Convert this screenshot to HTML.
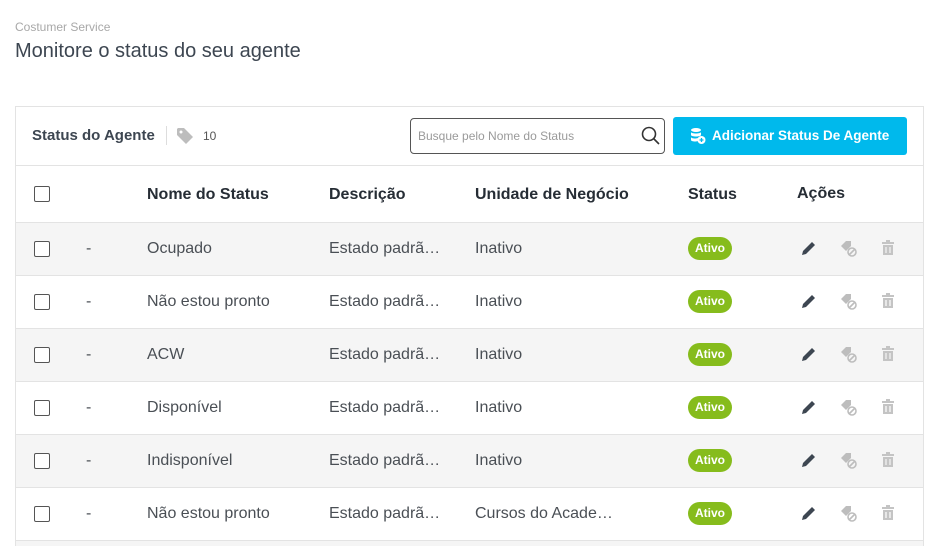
<!DOCTYPE html><html><head><style>
*{box-sizing:border-box;margin:0;padding:0}
html,body{width:931px;height:546px;overflow:hidden}
body{background:#fff;font-family:"Liberation Sans",sans-serif;color:#3d4651;position:relative}
.a{position:absolute}
.card{left:15px;top:106px;width:909px;height:440px;border:1px solid #e3e3e3}
.row{position:absolute;left:16px;width:907px;height:53px;border-top:1px solid #e3e3e3}
.g{background:#f5f5f5}
.cb{position:absolute;left:18px;top:18px;width:16px;height:16px;border:1.5px solid #555;border-radius:2px;background:#fff}
.t{position:absolute;top:17px;font-size:16px;color:#4a4f55;white-space:nowrap}
.badge{position:absolute;left:672px;top:14px;width:44px;height:23px;border-radius:12px;background:#86bc1c;color:#fff;font-size:12px;font-weight:bold;text-align:center;line-height:23px}
.h{position:absolute;top:20px;font-size:16px;font-weight:bold;color:#262d35}
.ic{position:absolute;top:17px}
</style></head><body>
<div class="a" style="left:15px;top:20px;font-size:12px;color:#a8a8a8">Costumer Service</div>
<div class="a" style="left:15px;top:40px;font-size:20px;color:#3d4651">Monitore o status do seu agente</div>
<div class="a card"></div>
<div class="a" style="left:32px;top:127px;font-size:15px;font-weight:bold;color:#3d4651">Status do Agente</div>
<div class="a" style="left:166px;top:126px;width:1px;height:19px;background:#ddd"></div>
<svg class="a" style="left:176px;top:127px" width="18" height="18" viewBox="0 0 18 18"><path d="M1 2v6l9 9 7-7-9-9H2z" fill="#bdbdbd"/><circle cx="5" cy="5" r="1.5" fill="#fff"/></svg>
<div class="a" style="left:203px;top:129px;font-size:12px;color:#555">10</div>
<div class="a" style="left:410px;top:118px;width:255px;height:36px;border:1px solid #555;border-radius:4px"></div>
<div class="a" style="left:418px;top:129px;font-size:12px;color:#9a9a9a">Busque pelo Nome do Status</div>
<svg class="a" style="left:641px;top:126px" width="20" height="20" viewBox="0 0 20 20"><circle cx="8" cy="8" r="6.5" stroke="#333" stroke-width="1.6" fill="none"/><path d="M13 13l5 5" stroke="#333" stroke-width="1.6"/></svg>
<div class="a" style="left:673px;top:117px;width:234px;height:38px;background:#00b9ec;border-radius:3px"></div>
<svg class="a" style="left:690px;top:127px" width="16" height="18" viewBox="0 0 16 18"><ellipse cx="6" cy="3" rx="5" ry="2" fill="#fff"/><path d="M1 5c0 2 10 2 10 0v3c0 2-10 2-10 0zM1 10c0 2 8 2 8 0v3c0 2-8 2-8 0z" fill="#fff"/><circle cx="11.5" cy="13" r="4" fill="#fff"/><path d="M11.5 11v4M9.5 13h4" stroke="#00b9ec" stroke-width="1.3"/></svg>
<div class="a" style="left:712px;top:128px;font-size:13.5px;font-weight:bold;color:#fff">Adicionar Status De Agente</div>
<div class="row" style="top:165px;height:57px">
<div class="cb" style="top:20px"></div>
<div class="h" style="left:131px">Nome do Status</div>
<div class="h" style="left:313px">Descrição</div>
<div class="h" style="left:459px">Unidade de Negócio</div>
<div class="h" style="left:672px">Status</div>
<div class="h" style="left:781px;top:19px">Ações</div>
</div>
<div class="row g" style="top:222px"><div class="cb"></div><div class="t" style="left:70px">-</div><div class="t" style="left:131px">Ocupado</div><div class="t" style="left:313px">Estado padrã…</div><div class="t" style="left:459px">Inativo</div><div class="badge">Ativo</div>
<svg class="ic" style="left:785px" width="16" height="16" viewBox="0 0 16 16"><path d="M1 15l1-4 9-9 3 3-9 9z" fill="#3d4651"/></svg><svg class="ic" style="left:824px" width="18" height="18" viewBox="0 0 18 18"><path d="M1 6l5-5h5v5l-5 5z" fill="#bdbdbd"/><circle cx="12" cy="12" r="4" fill="none" stroke="#bdbdbd" stroke-width="1.6"/><path d="M9.5 14.5l5-5" stroke="#bdbdbd" stroke-width="1.6"/></svg><svg class="ic" style="left:865px" width="14" height="16" viewBox="0 0 14 16"><path d="M1 3h12M5 1h4" stroke="#c4c4c4" stroke-width="2"/><path d="M2 5h10v10H2z" fill="#c4c4c4"/><path d="M5 7v6M9 7v6" stroke="#f5f5f5" stroke-width="1.2"/></svg></div>
<div class="row" style="top:275px"><div class="cb"></div><div class="t" style="left:70px">-</div><div class="t" style="left:131px">Não estou pronto</div><div class="t" style="left:313px">Estado padrã…</div><div class="t" style="left:459px">Inativo</div><div class="badge">Ativo</div>
<svg class="ic" style="left:785px" width="16" height="16" viewBox="0 0 16 16"><path d="M1 15l1-4 9-9 3 3-9 9z" fill="#3d4651"/></svg><svg class="ic" style="left:824px" width="18" height="18" viewBox="0 0 18 18"><path d="M1 6l5-5h5v5l-5 5z" fill="#bdbdbd"/><circle cx="12" cy="12" r="4" fill="none" stroke="#bdbdbd" stroke-width="1.6"/><path d="M9.5 14.5l5-5" stroke="#bdbdbd" stroke-width="1.6"/></svg><svg class="ic" style="left:865px" width="14" height="16" viewBox="0 0 14 16"><path d="M1 3h12M5 1h4" stroke="#c4c4c4" stroke-width="2"/><path d="M2 5h10v10H2z" fill="#c4c4c4"/><path d="M5 7v6M9 7v6" stroke="#fff" stroke-width="1.2"/></svg></div>
<div class="row g" style="top:328px"><div class="cb"></div><div class="t" style="left:70px">-</div><div class="t" style="left:131px">ACW</div><div class="t" style="left:313px">Estado padrã…</div><div class="t" style="left:459px">Inativo</div><div class="badge">Ativo</div>
<svg class="ic" style="left:785px" width="16" height="16" viewBox="0 0 16 16"><path d="M1 15l1-4 9-9 3 3-9 9z" fill="#3d4651"/></svg><svg class="ic" style="left:824px" width="18" height="18" viewBox="0 0 18 18"><path d="M1 6l5-5h5v5l-5 5z" fill="#bdbdbd"/><circle cx="12" cy="12" r="4" fill="none" stroke="#bdbdbd" stroke-width="1.6"/><path d="M9.5 14.5l5-5" stroke="#bdbdbd" stroke-width="1.6"/></svg><svg class="ic" style="left:865px" width="14" height="16" viewBox="0 0 14 16"><path d="M1 3h12M5 1h4" stroke="#c4c4c4" stroke-width="2"/><path d="M2 5h10v10H2z" fill="#c4c4c4"/><path d="M5 7v6M9 7v6" stroke="#f5f5f5" stroke-width="1.2"/></svg></div>
<div class="row" style="top:381px"><div class="cb"></div><div class="t" style="left:70px">-</div><div class="t" style="left:131px">Disponível</div><div class="t" style="left:313px">Estado padrã…</div><div class="t" style="left:459px">Inativo</div><div class="badge">Ativo</div>
<svg class="ic" style="left:785px" width="16" height="16" viewBox="0 0 16 16"><path d="M1 15l1-4 9-9 3 3-9 9z" fill="#3d4651"/></svg><svg class="ic" style="left:824px" width="18" height="18" viewBox="0 0 18 18"><path d="M1 6l5-5h5v5l-5 5z" fill="#bdbdbd"/><circle cx="12" cy="12" r="4" fill="none" stroke="#bdbdbd" stroke-width="1.6"/><path d="M9.5 14.5l5-5" stroke="#bdbdbd" stroke-width="1.6"/></svg><svg class="ic" style="left:865px" width="14" height="16" viewBox="0 0 14 16"><path d="M1 3h12M5 1h4" stroke="#c4c4c4" stroke-width="2"/><path d="M2 5h10v10H2z" fill="#c4c4c4"/><path d="M5 7v6M9 7v6" stroke="#fff" stroke-width="1.2"/></svg></div>
<div class="row g" style="top:434px"><div class="cb"></div><div class="t" style="left:70px">-</div><div class="t" style="left:131px">Indisponível</div><div class="t" style="left:313px">Estado padrã…</div><div class="t" style="left:459px">Inativo</div><div class="badge">Ativo</div>
<svg class="ic" style="left:785px" width="16" height="16" viewBox="0 0 16 16"><path d="M1 15l1-4 9-9 3 3-9 9z" fill="#3d4651"/></svg><svg class="ic" style="left:824px" width="18" height="18" viewBox="0 0 18 18"><path d="M1 6l5-5h5v5l-5 5z" fill="#bdbdbd"/><circle cx="12" cy="12" r="4" fill="none" stroke="#bdbdbd" stroke-width="1.6"/><path d="M9.5 14.5l5-5" stroke="#bdbdbd" stroke-width="1.6"/></svg><svg class="ic" style="left:865px" width="14" height="16" viewBox="0 0 14 16"><path d="M1 3h12M5 1h4" stroke="#c4c4c4" stroke-width="2"/><path d="M2 5h10v10H2z" fill="#c4c4c4"/><path d="M5 7v6M9 7v6" stroke="#f5f5f5" stroke-width="1.2"/></svg></div>
<div class="row" style="top:487px"><div class="cb"></div><div class="t" style="left:70px">-</div><div class="t" style="left:131px">Não estou pronto</div><div class="t" style="left:313px">Estado padrã…</div><div class="t" style="left:459px">Cursos do Acade…</div><div class="badge">Ativo</div>
<svg class="ic" style="left:785px" width="16" height="16" viewBox="0 0 16 16"><path d="M1 15l1-4 9-9 3 3-9 9z" fill="#3d4651"/></svg><svg class="ic" style="left:824px" width="18" height="18" viewBox="0 0 18 18"><path d="M1 6l5-5h5v5l-5 5z" fill="#bdbdbd"/><circle cx="12" cy="12" r="4" fill="none" stroke="#bdbdbd" stroke-width="1.6"/><path d="M9.5 14.5l5-5" stroke="#bdbdbd" stroke-width="1.6"/></svg><svg class="ic" style="left:865px" width="14" height="16" viewBox="0 0 14 16"><path d="M1 3h12M5 1h4" stroke="#c4c4c4" stroke-width="2"/><path d="M2 5h10v10H2z" fill="#c4c4c4"/><path d="M5 7v6M9 7v6" stroke="#fff" stroke-width="1.2"/></svg></div>
<div class="row g" style="top:540px;height:6px"></div>
</body></html>
